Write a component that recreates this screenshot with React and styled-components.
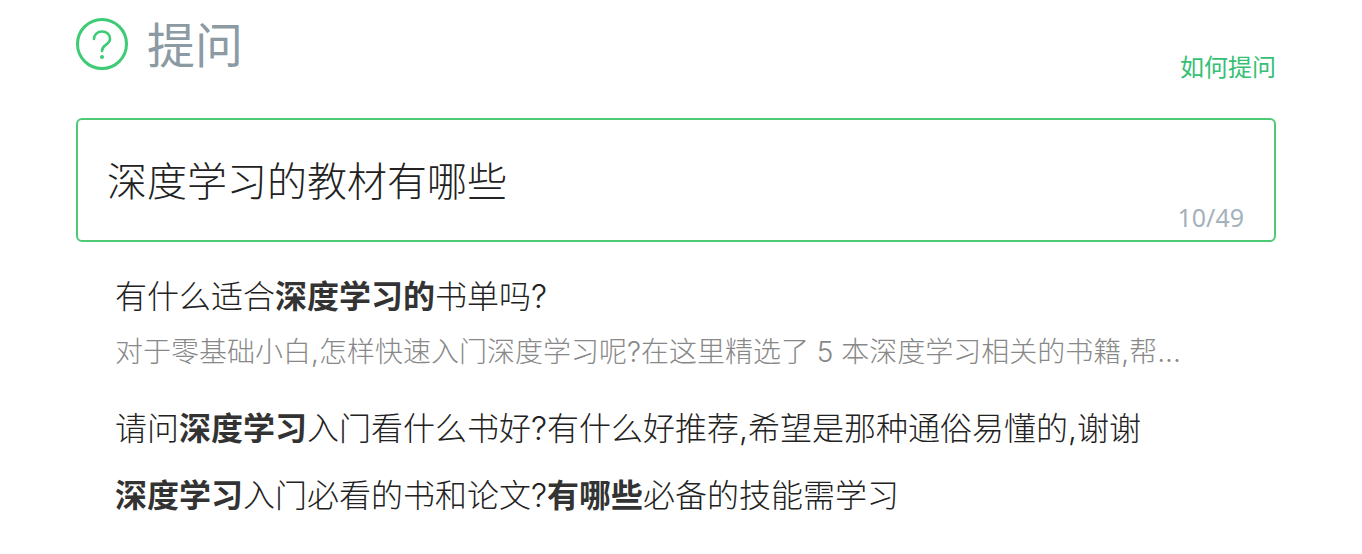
import styled, { createGlobalStyle } from 'styled-components';

const Global = createGlobalStyle`
  html, body { margin: 0; padding: 0; background: #fff; }
  body { font-family: "Inter", "Noto Sans CJK SC", sans-serif; font-weight: 300; }
`;

const Root = styled.div`
  width: 1200px;
  margin-left: 76px;
  height: 554px;
  overflow: hidden;
`;

const Header = styled.div`
  display: flex;
  justify-content: space-between;
  height: 118px;
  box-sizing: border-box;
`;

const TitleRow = styled.div`
  display: flex;
  align-items: flex-start;
  gap: 19px;
  padding-top: 18px;
`;

const Title = styled.div`
  font-size: 48px;
  font-weight: 400;
  line-height: 54px;
  margin-top: 1px;
  color: #8b9aa3;
`;

const HelpLink = styled.a`
  font-size: 24px;
  font-weight: 400;
  line-height: 32px;
  color: #35c073;
  padding-top: 52px;
`;

const InputBox = styled.div`
  position: relative;
  height: 124px;
  box-sizing: border-box;
  border: 2px solid #4fca74;
  border-radius: 6px;
  padding: 36px 30px 0 29px;
  font-size: 40px;
  line-height: 52px;
  color: #222;
`;

const Counter = styled.span`
  position: absolute;
  right: 30px;
  bottom: 7px;
  font-family: "Noto Sans", sans-serif;
  font-size: 25px;
  font-weight: 400;
  line-height: 32px;
  color: #a5b2bc;
`;

const Suggestions = styled.div`
  padding: 33px 39px 0;
`;

const Suggestion = styled.div`
  font-size: 32px;
  line-height: 44px;
  color: #222;
  margin-bottom: ${(p) => p.$gap}px;
  b { font-weight: 700; color: #333; }
`;

const Snippet = styled.div`
  font-size: 28px;
  line-height: 40px;
  color: #888;
  margin: 13px 0 35px;
  white-space: nowrap;
`;

export default function App() {
  return (
    <Root>
      <Global />
      <Header>
        <TitleRow>
          <svg width="52" height="52" viewBox="0 0 52 52" fill="none">
            <circle cx="26" cy="26" r="24.5" stroke="#3dcb75" strokeWidth="3" />
            <path d="M18 21c0-4.4 3.4-7.5 8-7.5s8 3 8 7c0 3.2-1.8 4.8-4.2 6.4-2.4 1.6-3.8 3-3.8 6.1" stroke="#3dcb75" strokeWidth="2.6" strokeLinecap="round" />
            <circle cx="26" cy="39" r="2" fill="#3dcb75" />
          </svg>
          <Title>提问</Title>
        </TitleRow>
        <HelpLink>如何提问</HelpLink>
      </Header>
      <InputBox>
        深度学习的教材有哪些
        <Counter>10/49</Counter>
      </InputBox>
      <Suggestions>
        <Suggestion $gap={0}>有什么适合<b>深度学习的</b>书单吗?</Suggestion>
        <Snippet>对于零基础小白,怎样快速入门深度学习呢?在这里精选了 5 本深度学习相关的书籍,帮...</Snippet>
        <Suggestion $gap={23}>请问<b>深度学习</b>入门看什么书好?有什么好推荐,希望是那种通俗易懂的,谢谢</Suggestion>
        <Suggestion $gap={0}><b>深度学习</b>入门必看的书和论文?<b>有哪些</b>必备的技能需学习</Suggestion>
      </Suggestions>
    </Root>
  );
}
